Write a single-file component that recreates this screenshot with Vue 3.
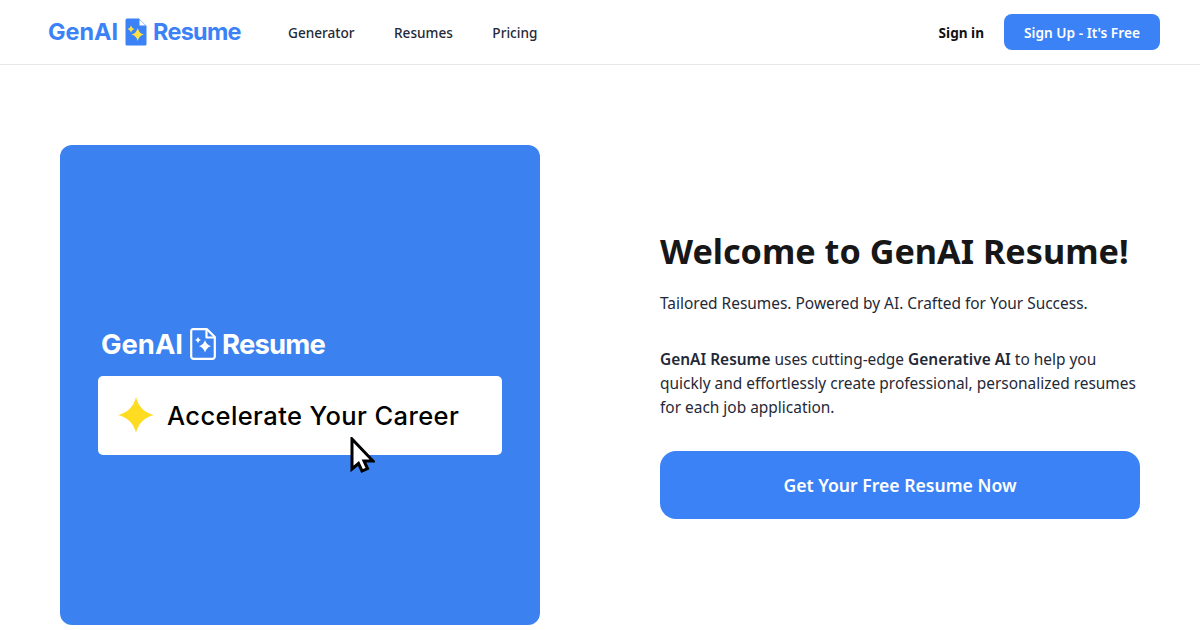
<script setup>
const links = ['Generator', 'Resumes', 'Pricing'];
</script>
<template>
  <div class="page">
    <header class="topbar">
      <div class="left">
        <a class="logo">
          <span>GenAI</span>
          <svg class="logo-icon" width="22" height="28" viewBox="0 0 22 28">
            <path d="M2 0.5H14L21.5 8V26a1.5 1.5 0 0 1-1.5 1.5H2A1.5 1.5 0 0 1 .5 26V2A1.5 1.5 0 0 1 2 .5Z" fill="#3b82f6" />
            <path d="M14.5 1.5L20.5 7.5H14.5Z" fill="#fff" />
            <path d="M12.7 10Q14 15.5 19 16.5Q14 17.5 12.7 23Q11.4 17.5 6.4 16.5Q11.4 15.5 12.7 10Z" fill="#fde047" />
            <path d="M6 7.5Q6.7 10.3 9.5 11Q6.7 11.7 6 14.5Q5.3 11.7 2.5 11Q5.3 10.3 6 7.5Z" fill="#fde047" />
          </svg>
          <span class="last">Resume</span>
        </a>
        <nav class="nav">
          <a v-for="link in links" :key="link">{{ link }}</a>
        </nav>
      </div>
      <div class="right">
        <a class="signin">Sign in</a>
        <button class="signup">Sign Up - It's Free</button>
      </div>
    </header>
    <main class="hero">
      <div class="banner">
        <div class="banner-logo">
          <span>GenAI</span>
          <svg width="26" height="32" viewBox="0 0 26 32" fill="none">
            <path d="M3 1.2H17L24.8 9V28.5A2.3 2.3 0 0 1 22.5 30.8H3.5A2.3 2.3 0 0 1 1.2 28.5V3A1.8 1.8 0 0 1 3 1.2Z" stroke="#fff" stroke-width="2.2" stroke-linejoin="round" />
            <path d="M16.5 1.5V9.5H24.5" stroke="#fff" stroke-width="2.2" stroke-linejoin="round" />
            <path d="M15 12Q16.4 17 21 18.2Q16.4 19.4 15 24.4Q13.6 19.4 9 18.2Q13.6 17 15 12Z" fill="#fff" />
            <path d="M8 9Q8.7 11.5 11 12.1Q8.7 12.7 8 15.2Q7.3 12.7 5 12.1Q7.3 11.5 8 9Z" fill="#fff" />
          </svg>
          <span class="last">Resume</span>
        </div>
        <div class="banner-box">
          <svg width="36" height="36" viewBox="0 0 36 36">
            <path d="M18 0Q21.5 14.5 36 18Q21.5 21.5 18 36Q14.5 21.5 0 18Q14.5 14.5 18 0Z" fill="#fddc22" />
          </svg>
          <span>Accelerate Your Career</span>
          <svg class="cursor" width="25" height="36" viewBox="0 0 25 36">
            <path d="M2 2V32L8.5 26.5L12 34L17.5 31.5L14 24H23Z" fill="#fff" stroke="#000" stroke-width="3" stroke-linejoin="miter" />
          </svg>
        </div>
      </div>
      <section class="intro">
        <h1>Welcome to GenAI Resume!</h1>
        <p class="tagline">Tailored Resumes. Powered by AI. Crafted for Your Success.</p>
        <p class="copy">
          <b>GenAI Resume</b> uses cutting-edge <b>Generative AI</b> to help you quickly and effortlessly create professional, personalized resumes for each job application.
        </p>
        <button class="cta">Get Your Free Resume Now</button>
      </section>
    </main>
  </div>
</template>
<style>
html, body {
  margin: 0;
  background: #fff;
}
</style>
<style scoped>
.page {
  width: 1200px;
  height: 630px;
  overflow: hidden;
  font-family: "Noto Sans", sans-serif;
  color: #1f2937;
}

.topbar {
  height: 64px;
  border-bottom: 1px solid #e5e7eb;
  padding: 0 40px 0 48px;
  display: flex;
  align-items: center;
  justify-content: space-between;
}

.left, .right {
  display: flex;
  align-items: center;
}

.logo {
  flex: none;
  display: flex;
  align-items: center;
  gap: 6.5px;
  font-family: "Inter", sans-serif;
  font-weight: 700;
  font-size: 23.4px;
  line-height: 28px;
  color: #3b82f6;
  width: 192px;
  white-space: nowrap;
}

.logo svg, .banner-logo svg {
  flex: none;
}

.logo .last {
  letter-spacing: -0.7px;
}

.nav {
  display: flex;
  gap: 39.5px;
  margin-left: 48px;
  font-size: 13.6px;
  font-weight: 500;
}

.signin {
  font-size: 13.6px;
  font-weight: 700;
  color: #111;
}

.signup {
  margin-left: 20px;
  width: 156px;
  height: 36px;
  border: none;
  border-radius: 8px;
  background: #3b82f6;
  color: #fff;
  font-family: inherit;
  font-size: 13.7px;
  font-weight: 600;
}

.hero {
  display: grid;
  grid-template-columns: 480px 480px;
  gap: 120px;
  padding: 80px 60px 0;
}

.banner {
  height: 480px;
  box-sizing: border-box;
  padding: 183px 0 0 38px;
  border-radius: 12px;
  background: #3b82f0;
}

.banner-logo {
  display: flex;
  align-items: center;
  gap: 6.5px;
  margin-left: 3px;
  font-family: "Inter", sans-serif;
  font-weight: 700;
  font-size: 27.4px;
  line-height: 32px;
  color: #fff;
}

.banner-logo .last {
  letter-spacing: -0.8px;
}

.banner-box {
  position: relative;
  width: 403.5px;
  height: 79.5px;
  margin-top: 15.5px;
  box-sizing: border-box;
  padding-left: 20px;
  display: flex;
  align-items: center;
  gap: 13px;
  border-radius: 5px;
  background: #fff;
  color: #000;
  font-family: "Inter", sans-serif;
  font-weight: 500;
  font-size: 25.5px;
  letter-spacing: 0.4px;
}

.cursor {
  position: absolute;
  left: 252px;
  top: 61px;
}

.intro {
  display: flex;
  flex-direction: column;
  padding-top: 79px;
}

h1 {
  margin: 0;
  font-size: 34.2px;
  line-height: 54px;
  font-weight: 700;
  color: #171717;
}

.tagline {
  margin: 13px 0 0;
  font-size: 15.45px;
  line-height: 24px;
}

.copy {
  margin: 32px 0 0;
  font-size: 15.45px;
  line-height: 24px;
}

.copy b {
  font-weight: 600;
}

.cta {
  margin-top: 32px;
  height: 68px;
  border: none;
  border-radius: 16px;
  background: #3b82f6;
  color: #fff;
  font-family: inherit;
  font-size: 17.6px;
  font-weight: 600;
}
</style>
